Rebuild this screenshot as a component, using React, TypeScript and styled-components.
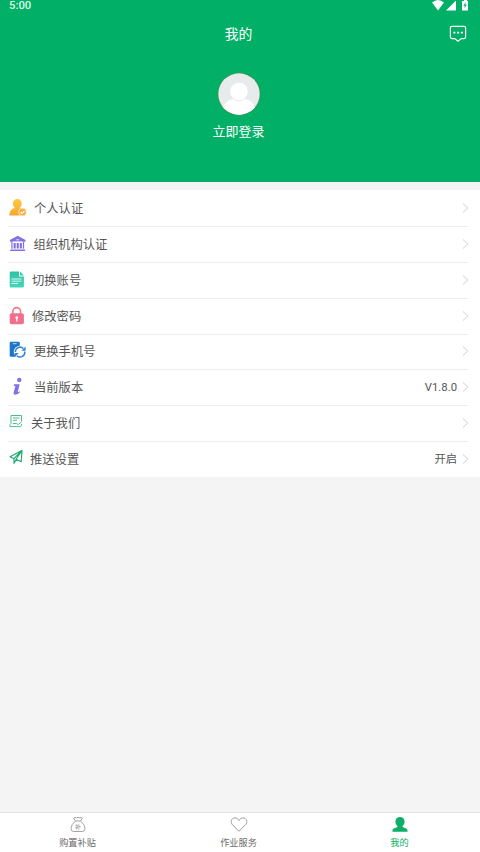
import React from "react";
import styled, { createGlobalStyle } from "styled-components";

const GlobalStyle = createGlobalStyle`
  * { box-sizing: border-box; }
  body {
    margin: 0;
    background: #f4f4f4;
    font-family: Roboto, "Noto Sans CJK SC", sans-serif;
  }
`;

const Page = styled.div`
  height: 852px;
  display: flex;
  flex-direction: column;
  background: #f4f4f4;
  overflow: hidden;
`;

const Header = styled.header`
  height: 182px;
  flex: none;
  background: #02af66;
  color: #fff;
  display: flex;
  flex-direction: column;
`;

const StatusBar = styled.div`
  height: 14px;
  padding: 0 11px 0 9px;
  display: flex;
  justify-content: space-between;
  align-items: flex-start;
`;

const Clock = styled.span`
  font-size: 11.3px;
  font-weight: 500;
  line-height: 12px;
  color: #dcfaea;
`;

const TitleBar = styled.div`
  height: 40px;
  display: grid;
  grid-template-columns: 30px 1fr 33px;
  align-items: center;
`;

const Title = styled.h1`
  margin: 0;
  text-align: center;
  font-size: 13.8px;
  font-weight: 400;
  line-height: 20px;
`;

const Profile = styled.div`
  width: 477px;
  padding-top: 17px;
  display: flex;
  flex-direction: column;
  align-items: center;
`;

const LoginLabel = styled.span`
  margin-top: 5px;
  font-size: 13px;
  line-height: 20px;
`;

const Menu = styled.main`
  margin-top: 8px;
  height: 287px;
  flex: none;
  background: #fff;
  display: grid;
  grid-template-rows: repeat(8, 1fr);
`;

const Row = styled.div`
  display: flex;
  align-items: center;
  padding: 0 11px 0 8px;
  & + & {
    background: linear-gradient(#eeeeee, #eeeeee) 8px 0 / 460px 1px no-repeat;
  }
`;

const Label = styled.span<{ $gap: number }>`
  margin-left: ${(p) => p.$gap}px;
  padding-top: 2px;
  flex: 1;
  font-size: 12.3px;
  line-height: 18px;
  color: #555;
`;

const Value = styled.span`
  padding-top: 2px;
  font-size: 11.3px;
  line-height: 18px;
  color: #555;
  margin-right: 5px;
`;

const Spacer = styled.div`
  flex: 1;
`;

const TabBar = styled.nav`
  height: 40px;
  flex: none;
  width: 483px;
  margin-left: -3px;
  border-top: 1px solid #e2e2e2;
  background: #fff;
  display: grid;
  grid-template-columns: repeat(3, 161px);
`;

const Tab = styled.div<{ $active?: boolean }>`
  display: flex;
  flex-direction: column;
  align-items: center;
  padding-top: 3px;
  font-size: 9.2px;
  line-height: 14px;
  color: ${(p) => (p.$active ? "#0cae68" : "#6c6c6c")};
  svg { margin-bottom: 3px; }
`;

const Icon = styled.svg`
  display: block;
  flex: none;
`;

const MoneyGlyph = styled.text`
  font-size: 6px;
  font-family: "Noto Sans CJK SC", sans-serif;
`;

const StatusIcons = () => (
  <Icon width="38" height="12" viewBox="0 0 38 12" fill="#fff">
    <path d="M1 2.500Q7 -2.500 13 2.500L7 10.500Z" />
    <path d="M25 .5V10.500H15Z" />
    <path d="M33 0h3v1h1v9.500h-6V1h2z" />
    <path d="M34.400 2.200L32.400 5.700h1.300v2.600l2-3.600h-1.300z" fill="#02af66" />
  </Icon>
);

const MessageIcon = () => (
  <Icon width="22" height="20" viewBox="0 0 20 18" fill="none" stroke="#fff" strokeWidth="1.100">
    <path d="M4.500 2h11q1.400 0 1.400 1.400v8.400q0 1.400-1.400 1.400H13l-3 2.300-3-2.300H4.500q-1.400 0-1.400-1.400V3.400Q3.100 2 4.500 2z" />
    <path d="M5.800 7.700h1.800m1.600 0H11m1.600 0h1.800" strokeWidth="1.700" />
  </Icon>
);

const Avatar = () => (
  <Icon width="46" height="46" viewBox="0 0 46 46">
    <defs>
      <clipPath id="face"><circle cx="23" cy="23" r="20.700" /></clipPath>
    </defs>
    <circle cx="23" cy="23" r="21.700" fill="#309b57" />
    <circle cx="23" cy="23" r="20.700" fill="#e7ebec" />
    <g clipPath="url(#face)" fill="#fff">
      <path d="M7 46V37q2-7.500 10-9h12q8 1.500 10 9v9z" />
      <circle cx="23" cy="20.500" r="9.300" stroke="#e7ebec" strokeWidth="1" />
    </g>
  </Icon>
);

const Chevron = () => (
  <Icon width="7" height="12" viewBox="0 0 7 12" fill="none" stroke="#d0d0d0" strokeWidth="1">
    <path d="M1 1.500L5.800 6 1 10.500" />
  </Icon>
);

const PersonCheck = () => (
  <>
    <defs>
      <linearGradient id="gold" x1="0" y1="0" x2="0" y2="1">
        <stop offset="0" stopColor="#ffca45" /><stop offset="1" stopColor="#f9a52c" />
      </linearGradient>
    </defs>
    <path fill="url(#gold)" d="M9.300 1C12 1 13.700 3 13.700 5.500c0 1.800-.9 3.600-2.100 4.500 3.400.7 5.200 3 5.400 7.500H1.300c.2-4.500 2.300-6.800 5.700-7.500-1.200-.9-2.100-2.700-2.100-4.500C4.900 3 6.600 1 9.300 1z" />
    <circle cx="14.500" cy="14" r="3.900" fill="#f8ad3c" stroke="#fff" strokeWidth=".6" />
    <path d="M12.700 14l1.400 1.400 2.400-2.600" fill="none" stroke="#fff" strokeWidth="1.100" />
  </>
);

const Institution = () => (
  <g fill="#8171e4">
    <path d="M9.700 1.700L17.500 6v1.700H1.900V6z" />
    <path d="M3.300 7.700h1.200v7H3.300zm11.600 0h1.200v7h-1.200zM5.600 9h2.100v5.600H5.600zm3.100 0h2.100v5.600H8.700zm3.100 0h2.100v5.600h-2.100zM2.300 15.400h14.800v1.500H2.300z" />
    <path d="M8.300 5.800h2.800M5 7.900h9.500" stroke="#fff" strokeWidth=".8" />
  </g>
);

const Document = () => (
  <>
    <defs>
      <linearGradient id="mint" x1="0" y1="0" x2="0" y2="1">
        <stop offset="0" stopColor="#2ac5a3" /><stop offset="1" stopColor="#48d3bb" />
      </linearGradient>
    </defs>
    <path d="M3 1.500h8v4.900h4.900v9.800q0 1.300-1.300 1.300H3q-1.300 0-1.300-1.300V2.800q0-1.300 1.300-1.300z" fill="url(#mint)" />
    <path d="M12 1.500l3.900 4H12z" fill="#35c8a8" />
    <path d="M3.500 9h10M3.500 11.200h10M3.500 13.500h6.500" stroke="#dcfaf1" strokeWidth="1" />
  </>
);

const Lock = () => (
  <>
    <path d="M4.800 9V5.500a3.900 3.900 0 017.800 0V9" fill="none" stroke="#f27790" strokeWidth="1.600" />
    <rect x="1.700" y="7.300" width="14.200" height="11" rx="1.700" fill="#f16f8c" />
    <circle cx="8.800" cy="11.700" r="1.400" fill="#fff" />
    <path d="M8.800 12v3.500" stroke="#fff" strokeWidth="1.200" />
  </>
);

const PhoneSwap = () => (
  <>
    <path d="M3 .8h7.500q1.300 0 1.300 1.300V6L7.500 15.700H3q-1.300 0-1.300-1.300V2.100Q1.700.8 3 .8z" fill="#1d75ca" />
    <path d="M4.800 2.700h3.800" stroke="#bfe0ff" strokeWidth="1" />
    <circle cx="12" cy="10.900" r="6.200" fill="#fff" />
    <path d="M7.300 11a4.800 4.800 0 018.100-3.500M16.800 10.500a4.800 4.800 0 01-8 4.200" fill="none" stroke="#3186d5" strokeWidth="1.500" />
    <path d="M17.600 5.600v4.200h-4.200zM6.600 16.200V12h4.200z" fill="#3186d5" />
  </>
);

const Info = () => (
  <g fill="#8671e2">
    <circle cx="11.300" cy="2.900" r="2.200" />
    <path d="M6.100 7.300h5.600L9.700 14.900q-.2 1 1.900-.7l.6.700q-2.500 2.900-5 2.900-2.100 0-1.600-2.100L7.400 9q-.7-.3-1.900.3z" />
  </g>
);

const AboutPage = () => (
  <g fill="none" stroke="#4fbe8c" strokeWidth="1">
    <path d="M13.500 8.500V2.500H3v8.300M2 11.300v2.300h10.200q1.700-.2 1.300-2.600" />
    <path d="M5 5h6.500M5 7.300h4M4.800 10.500h3.500l1.900 1 3.300-2.500" />
  </g>
);

const PaperPlane = () => (
  <g fill="none" stroke="#1baa6c" strokeWidth="1.150" strokeLinejoin="round">
    <path d="M14 1.500L2 7.700l4 2L14 1.500l-.8 11.200-5.200-2.400L14 1.500M6 9.700v4.600l2.200-3.800" />
  </g>
);

const items = [
  { label: "个人认证", gap: 6, Art: PersonCheck },
  { label: "组织机构认证", gap: 5.5, Art: Institution },
  { label: "切换账号", gap: 4, Art: Document },
  { label: "修改密码", gap: 4, Art: Lock },
  { label: "更换手机号", gap: 6, Art: PhoneSwap },
  { label: "当前版本", gap: 6, Art: Info, value: "V1.8.0" },
  { label: "关于我们", gap: 3, Art: AboutPage },
  { label: "推送设置", gap: 2, Art: PaperPlane, value: "开启" },
];

export default function App() {
  return (
    <Page>
      <GlobalStyle />
      <Header>
        <StatusBar><Clock>5:00</Clock><StatusIcons /></StatusBar>
        <TitleBar><span /><Title>我的</Title><MessageIcon /></TitleBar>
        <Profile><Avatar /><LoginLabel>立即登录</LoginLabel></Profile>
      </Header>
      <Menu>
        {items.map(({ label, gap, Art, value }) => (
          <Row key={label}>
            <Icon width="20" height="20" viewBox="0 0 20 20"><Art /></Icon>
            <Label $gap={gap}>{label}</Label>
            {value && <Value>{value}</Value>}
            <Chevron />
          </Row>
        ))}
      </Menu>
      <Spacer />
      <TabBar>
        <Tab>
          <Icon width="18" height="17" viewBox="0 0 18 17" fill="none" stroke="#999" strokeWidth=".9">
            <path d="M6.500 5L4.600 2.200q1.500-1.300 2.800-.3 1.600-1.200 3.200 0 1.500-1 2.800.3L11.500 5M6.500 5h5q4.500 3.500 4.500 7.500 0 3-2.500 3H4.500q-2.500 0-2.500-3Q2 8.500 6.500 5z" />
            <MoneyGlyph x="6" y="12.700" fill="#888" stroke="none">补</MoneyGlyph>
          </Icon>
          购置补贴
        </Tab>
        <Tab>
          <Icon width="18" height="17" viewBox="0 0 18 17" fill="none" stroke="#999" strokeWidth="1">
            <path d="M9 15.300L2.200 8.400C.2 6 1.200 2 4.900 1.900 7 1.900 8.300 3.200 9 4.600c.7-1.400 2-2.700 4.100-2.700 3.700.1 4.700 4.100 2.700 6.500z" />
          </Icon>
          作业服务
        </Tab>
        <Tab $active>
          <Icon width="18" height="17" viewBox="0 0 18 17" fill="#0cae68">
            <path d="M9 .9c2.800 0 4.600 1.900 4.600 4.600 0 1.900-.8 3.500-2.100 4.500v1.100l4.200 1.700q.9.500.9 2.900H1.400q0-2.400.9-2.900l4.200-1.700V10c-1.300-1-2.100-2.600-2.100-4.500C4.400 2.800 6.200.9 9 .9z" />
          </Icon>
          我的
        </Tab>
      </TabBar>
    </Page>
  );
}
